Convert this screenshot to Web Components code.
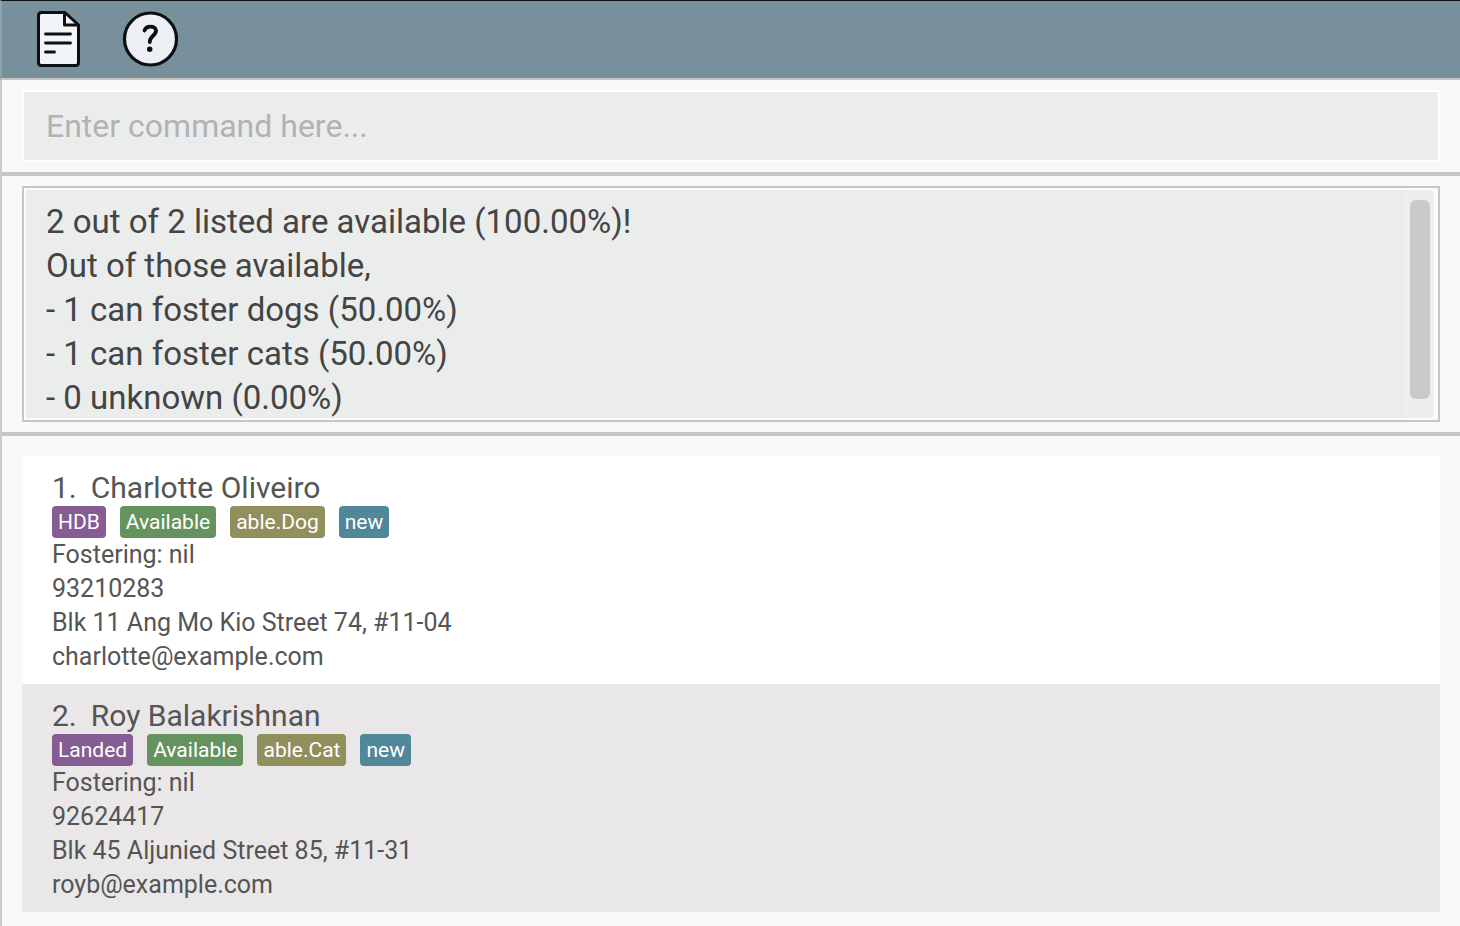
<!DOCTYPE html>
<html lang="en">
<head>
<meta charset="utf-8">
<title>Foster contacts</title>
<style>
  html { background: #f8f8f8; }
  body {
    margin: 0;
    font-family: Roboto, "Liberation Sans", sans-serif;
    font-weight: 400;
    color: #555;
  }
</style>
</head>
<body>
<foster-app></foster-app>

<template id="tpl-app">
  <style>
    :host {
      display: flex;
      flex-direction: column;
      min-height: 100vh;
      background: #f8f8f8;
    }
    main { flex: 1; border-left: 2px solid #cbcbcb; }
    .pane { padding: 10px 20px; border-bottom: 4px solid #c6c6c6; }
    .people { padding: 20px 20px 14px; }
  </style>
  <menu-bar></menu-bar>
  <main>
    <div class="pane"><command-box></command-box></div>
    <div class="pane"><result-display>2 out of 2 listed are available (100.00%)!
Out of those available,
- 1 can foster dogs (50.00%)
- 1 can foster cats (50.00%)
- 0 unknown (0.00%)</result-display></div>
    <div class="people" role="list">
      <person-card index="1" name="Charlotte Oliveiro">
        <tag-label slot="tags" kind="housing">HDB</tag-label>
        <tag-label slot="tags" kind="status">Available</tag-label>
        <tag-label slot="tags" kind="animal">able.Dog</tag-label>
        <tag-label slot="tags">new</tag-label>
        <div>Fostering: nil</div>
        <div>93210283</div>
        <div>Blk 11 Ang Mo Kio Street 74, #11-04</div>
        <div>charlotte@example.com</div>
      </person-card>
      <person-card index="2" name="Roy Balakrishnan" shaded>
        <tag-label slot="tags" kind="housing">Landed</tag-label>
        <tag-label slot="tags" kind="status">Available</tag-label>
        <tag-label slot="tags" kind="animal">able.Cat</tag-label>
        <tag-label slot="tags">new</tag-label>
        <div>Fostering: nil</div>
        <div>92624417</div>
        <div>Blk 45 Aljunied Street 85, #11-31</div>
        <div>royb@example.com</div>
      </person-card>
    </div>
  </main>
</template>

<template id="tpl-menu">
  <style>
    :host { display: block; }
    nav {
      display: flex;
      align-items: center;
      gap: 38px;
      box-sizing: border-box;
      height: 80px;
      padding: 0 34px 2px;
      background: #78909c;
      border-top: 1px solid #101314;
      border-left: 2px solid #8ea2ac;
      border-bottom: 2px solid #c4c4c4;
    }
    button {
      display: block;
      padding: 0;
      border: 0;
      background: none;
      cursor: pointer;
    }
    svg { display: block; }
  </style>
  <nav aria-label="Main">
    <button type="button" aria-label="File">
      <svg width="46" height="58" viewBox="0 0 46 58" fill="none" stroke="#0d1012" stroke-linecap="round" stroke-linejoin="round">
        <path d="M5.500 2.500H29L42.500 15V52.500Q42.500 55.500 39.500 55.500H5.500Q2.500 55.500 2.500 52.500V5.500Q2.500 2.500 5.500 2.500Z" fill="#f1f5f7" stroke-width="3"/>
        <path d="M28.500 3V15H42" stroke-width="3"/>
        <path d="M9.500 24H34.500M9.500 33H34.500M9.500 42H18.500" stroke-width="2.800"/>
      </svg>
    </button>
    <button type="button" aria-label="Help">
      <svg width="60" height="58" viewBox="0 0 60 58" fill="none" stroke="#0d1012" stroke-linecap="round" stroke-linejoin="round">
        <circle cx="30.500" cy="29" r="26" fill="#eceff3" stroke-width="3.200"/>
        <path d="M24.500 20.500C26 15.300 35.500 15.300 36 20.500C36.400 25.500 29.800 25.500 29.800 32" stroke-width="3.800"/>
        <circle cx="29.700" cy="39.300" r="2.700" fill="#0d1012" stroke="none"/>
      </svg>
    </button>
  </nav>
</template>

<template id="tpl-command">
  <style>
    :host { display: block; }
    input {
      display: block;
      box-sizing: border-box;
      width: 100%;
      height: 72px;
      margin: 0;
      padding: 0 22px;
      border: 2px solid #fff;
      border-radius: 0;
      outline: 0;
      background: #ebedec;
      color: #444;
      font: inherit;
      font-size: 32px;
    }
    input::placeholder { color: #b2b2b2; opacity: 1; }
  </style>
  <input type="text" aria-label="Command" placeholder="Enter command here...">
</template>

<template id="tpl-result">
  <style>
    :host {
      display: flex;
      height: 228px;
      padding: 2px;
      border: 2px solid #c6c6c6;
      background: #fafafa;
    }
    textarea {
      flex: 1;
      min-width: 0;
      box-sizing: border-box;
      margin: 0;
      padding: 10px 20px 0;
      border: 0;
      outline: 0;
      resize: none;
      overflow: hidden;
      background: #ebedec;
      color: #444;
      font: inherit;
      font-size: 33px;
      line-height: 44px;
    }
    .track {
      flex: none;
      width: 20px;
      margin-right: 2px;
      padding: 10px 4px 0 6px;
      border-radius: 0 4px 4px 0;
      background: #eee;
    }
    .thumb { height: 199px; border-radius: 6px; background: #cacaca; }
  </style>
  <textarea readonly aria-label="Result"></textarea>
  <div class="track"><div class="thumb"></div></div>
</template>

<template id="tpl-card">
  <style>
    :host {
      display: block;
      padding: 10px 30px;
      background: #fff;
      font-size: 25px;
      line-height: 34px;
    }
    :host([shaded]) { background: #e9e7e8; }
    header {
      display: flex;
      gap: 14px;
      padding-top: 4px;
      font-size: 30px;
      line-height: 36px;
    }
    .tags { display: flex; flex-wrap: wrap; gap: 14px; }
  </style>
  <header><span class="index"></span><span class="name"></span></header>
  <div class="tags"><slot name="tags"></slot></div>
  <slot></slot>
</template>

<template id="tpl-tag">
  <style>
    :host {
      display: block;
      padding: 0 6px;
      border-radius: 4px;
      background: #50879a;
      color: #fff;
      font-size: 21px;
      line-height: 32px;
    }
    :host([kind="housing"]) { background: #855c93; }
    :host([kind="status"]) { background: #65935d; }
    :host([kind="animal"]) { background: #918f5c; }
  </style>
  <slot></slot>
</template>

<script>
  class TemplateElement extends HTMLElement {
    constructor() {
      super();
      const template = document.getElementById(this.constructor.template);
      this.attachShadow({ mode: "open" }).append(template.content.cloneNode(true));
    }
  }

  class TagLabel extends TemplateElement {
    static template = "tpl-tag";
  }

  class PersonCard extends TemplateElement {
    static template = "tpl-card";
    connectedCallback() {
      this.setAttribute("role", "listitem");
      this.shadowRoot.querySelector(".index").textContent = this.getAttribute("index") + ".";
      this.shadowRoot.querySelector(".name").textContent = this.getAttribute("name");
    }
  }

  class ResultDisplay extends TemplateElement {
    static template = "tpl-result";
    connectedCallback() {
      this.shadowRoot.querySelector("textarea").value = this.textContent;
    }
  }

  class CommandBox extends TemplateElement {
    static template = "tpl-command";
  }

  class MenuBar extends TemplateElement {
    static template = "tpl-menu";
  }

  class FosterApp extends TemplateElement {
    static template = "tpl-app";
  }

  customElements.define("tag-label", TagLabel);
  customElements.define("person-card", PersonCard);
  customElements.define("result-display", ResultDisplay);
  customElements.define("command-box", CommandBox);
  customElements.define("menu-bar", MenuBar);
  customElements.define("foster-app", FosterApp);
</script>
</body>
</html>
